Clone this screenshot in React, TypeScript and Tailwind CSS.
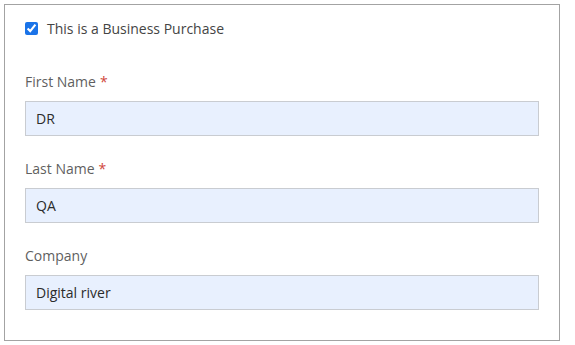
import { useState } from "react";

interface FieldProps {
	label: string;
	value: string;
	required?: boolean;
}

function Field({ label, value, required }: FieldProps) {
	return (
		<div className="flex flex-col">
			<label className="h-5 leading-5 text-[14px] text-[#5f5f5f]">
				{label}
				{required && <span className="ml-1 text-[#d0463b]">*</span>}
			</label>
			<input
				className="mt-[9px] h-[35px] w-[514px] border border-[#c9ccd1] bg-[#e8f0fe] px-[10px] text-[14px] text-[#2b2b2b] outline-none"
				defaultValue={value}
				readOnly
			/>
		</div>
	);
}

export default function App() {
	const [checked, setChecked] = useState(true);

	return (
		<div className="bg-white w-[575px] h-[345px] pt-1 pl-1 font-['Open_Sans',sans-serif]">
			<div className="w-[556px] h-[337px] border border-[#a3a3a3] pl-5 pt-[13px]">
				<label className="flex h-5 items-center gap-[9px] text-[14px] text-[#444]">
					<input
						type="checkbox"
						className="h-[13px] w-[13px] accent-[#1a73e8]"
						checked={checked}
						onChange={(e) => setChecked(e.target.checked)}
					/>
					This is a Business Purchase
				</label>
				<div className="mt-[34px] flex flex-col gap-[23px]">
					<Field label="First Name" value="DR" required />
					<Field label="Last Name" value="QA" required />
					<Field label="Company" value="Digital river" />
				</div>
			</div>
		</div>
	);
}
